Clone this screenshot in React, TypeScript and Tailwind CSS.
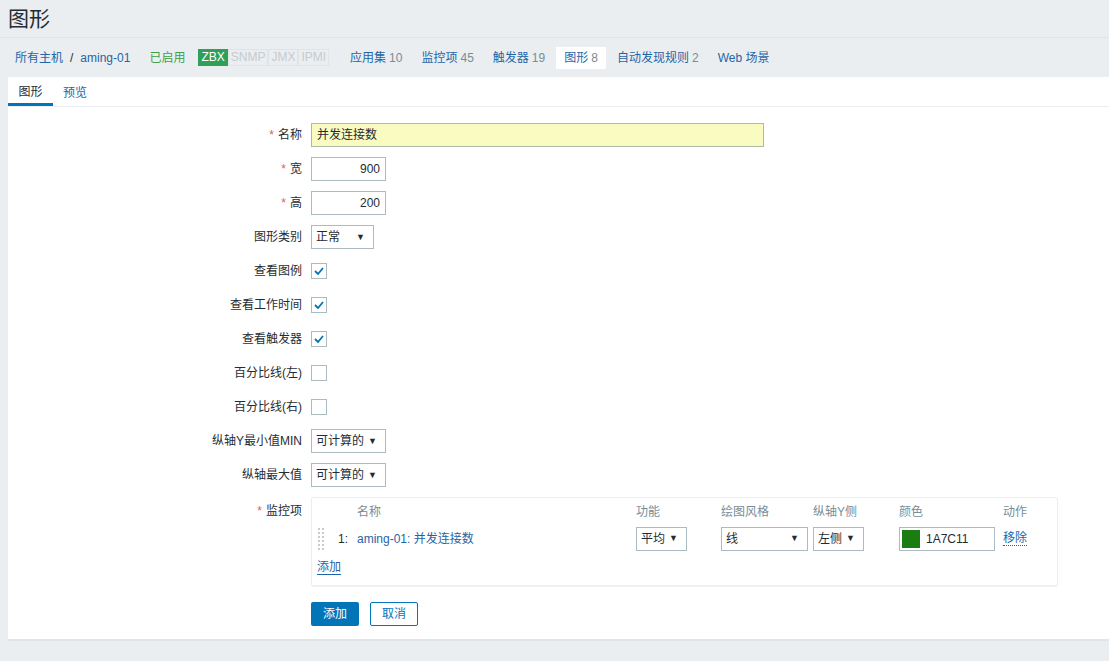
import React from 'react'

const FONT = { fontFamily: '"Liberation Sans", Arial, "Noto Sans CJK SC", sans-serif' }

function Arrow() {
  return <span className="text-[9px] leading-none text-[#1f2c33]">▼</span>
}

function Select({ label, w }: { label: string; w: string }) {
  return (
    <div className={`flex items-center justify-between h-[24px] border border-[#acbbc2] bg-white pl-[4px] pr-[8px] ${w}`}>
      <span>{label}</span>
      <Arrow />
    </div>
  )
}

function Check({ on }: { on: boolean }) {
  return (
    <div className="w-[16px] h-[16px] border border-[#acbbc2] bg-white flex items-center justify-center">
      {on && (
        <svg width="10" height="8" viewBox="0 0 10 8">
          <path d="M1 4 L4 7 L9 1" fill="none" stroke="#0275b8" strokeWidth="1.8" />
        </svg>
      )}
    </div>
  )
}

function Row({ label, req, children }: { label: string; req?: boolean; children: React.ReactNode }) {
  return (
    <div className="flex items-center h-[34px]">
      <div className="w-[303px] text-right pr-[9px]">
        {req && <span className="text-[#e45959] mr-[4px]">*</span>}
        {label}
      </div>
      {children}
    </div>
  )
}

const NAV = [
  { t: '应用集', n: '10' },
  { t: '监控项', n: '45' },
  { t: '触发器', n: '19' },
  { t: '图形', n: '8', active: true },
  { t: '自动发现规则', n: '2' },
  { t: 'Web 场景', n: '' },
]

export default function App() {
  return (
    <div style={FONT} className="w-[1109px] h-[661px] bg-[#ebeef0] text-[12px] text-[#1f2c33] overflow-hidden">
      {/* header */}
      <div className="h-[38px] border-b border-[#dfe4e7] px-[8px] flex items-center">
        <h1 className="text-[21px] leading-none">图形</h1>
      </div>

      {/* host nav */}
      <div className="h-[39px] flex items-center pl-[15px]">
        <span className="text-[#1f65a6]">所有主机</span>
        <span className="mx-[7px]">/</span>
        <span className="text-[#1f65a6]">aming-01</span>
        <span className="ml-[19px] text-[#429e47]">已启用</span>
        <div className="ml-[13px] flex items-center h-[17px]">
          <span className="bg-[#2f9f5a] text-white px-[3px] h-[17px] leading-[17px]">ZBX</span>
          <span className="text-[#c5cbce] border border-[#dfe4e7] px-[2px] h-[17px] leading-[15px]">SNMP</span>
          <span className="text-[#c5cbce] border border-[#dfe4e7] px-[2px] h-[17px] leading-[15px]">JMX</span>
          <span className="text-[#c5cbce] border border-[#dfe4e7] px-[2px] h-[17px] leading-[15px]">IPMI</span>
        </div>
        <div className="ml-[13px] flex items-center">
          {NAV.map((n) => (
            <div
              key={n.t}
              className={`px-[8px] h-[22px] flex items-center mr-[3px] ${n.active ? 'bg-white' : ''}`}
            >
              <span className="text-[#1f65a6]">{n.t}</span>
              {n.n && <span className="ml-[3px] text-[#768d99]">{n.n}</span>}
            </div>
          ))}
        </div>
      </div>

      {/* card */}
      <div className="ml-[8px] bg-white h-[564px] border-b-[2px] border-[#dfe4e7]">
        <div className="h-[30px] flex border-b border-[#ebeef0]">
          <div className="w-[45px] flex items-center justify-center border-b-[3px] border-[#0275b8] pt-[3px]">图形</div>
          <div className="ml-[10px] flex items-center pt-[3px] text-[#1f65a6]">预览</div>
        </div>

        <div className="pt-[11px]">
          <Row label="名称" req>
            <div className="w-[453px] h-[24px] border border-[#acbba8] bg-[#fafbc0] flex items-center px-[5px]">并发连接数</div>
          </Row>
          <Row label="宽" req>
            <div className="w-[75px] h-[24px] border border-[#acbbc2] flex items-center justify-end px-[5px]">900</div>
          </Row>
          <Row label="高" req>
            <div className="w-[75px] h-[24px] border border-[#acbbc2] flex items-center justify-end px-[5px]">200</div>
          </Row>
          <Row label="图形类别">
            <Select label="正常" w="w-[63px]" />
          </Row>
          <Row label="查看图例"><Check on /></Row>
          <Row label="查看工作时间"><Check on /></Row>
          <Row label="查看触发器"><Check on /></Row>
          <Row label="百分比线(左)"><Check on={false} /></Row>
          <Row label="百分比线(右)"><Check on={false} /></Row>
          <Row label="纵轴Y最小值MIN">
            <Select label="可计算的" w="w-[75px]" />
          </Row>
          <Row label="纵轴最大值">
            <Select label="可计算的" w="w-[75px]" />
          </Row>

          <div className="flex mt-[5px]">
            <div className="w-[303px] text-right pr-[9px] pt-[5px]">
              <span className="text-[#e45959] mr-[4px]">*</span>监控项
            </div>
            <div className="w-[747px] h-[89px] border border-[#ebeef0] rounded-[2px] shadow-[0_1px_1px_rgba(0,0,0,0.06)] px-[5px] pt-[4px]">
              <div className="flex h-[20px] items-center text-[#768d99]">
                <div className="w-[40px]" />
                <div className="w-[279px]">名称</div>
                <div className="w-[85px]">功能</div>
                <div className="w-[92px]">绘图风格</div>
                <div className="w-[86px]">纵轴Y侧</div>
                <div className="w-[104px]">颜色</div>
                <div>动作</div>
              </div>
              <div className="flex h-[33px] items-center">
                <div className="w-[21px] flex justify-start pl-[1px]">
                  <div className="grid grid-cols-2 gap-[2px]">
                    {Array.from({ length: 12 }).map((_, i) => (
                      <div key={i} className="w-[2px] h-[2px] bg-[#c5cbce]" />
                    ))}
                  </div>
                </div>
                <div className="w-[19px]">1:</div>
                <div className="w-[279px] text-[#1f65a6]">aming-01: 并发连接数</div>
                <div className="w-[85px]"><Select label="平均" w="w-[51px]" /></div>
                <div className="w-[92px]"><Select label="线" w="w-[87px]" /></div>
                <div className="w-[86px]"><Select label="左侧" w="w-[51px]" /></div>
                <div className="w-[104px]">
                  <div className="w-[96px] h-[24px] border border-[#acbbc2] flex items-center px-[2px]">
                    <div className="w-[18px] h-[18px] bg-[#1a7c11]" />
                    <span className="ml-[6px]">1A7C11</span>
                  </div>
                </div>
                <span className="text-[#1f65a6] border-b border-dotted border-[#1f65a6] leading-[14px]">移除</span>
              </div>
              <div className="h-[24px] flex items-center">
                <span className="text-[#1f65a6] border-b border-[#1f65a6] leading-[14px]">添加</span>
              </div>
            </div>
          </div>

          <div className="flex mt-[16px] pl-[303px] gap-[11px]">
            <div className="w-[48px] h-[24px] bg-[#0275b8] text-white rounded-[2px] flex items-center justify-center">添加</div>
            <div className="w-[48px] h-[24px] border border-[#0275b8] text-[#0275b8] rounded-[2px] flex items-center justify-center">取消</div>
          </div>
        </div>
      </div>
    </div>
  )
}
